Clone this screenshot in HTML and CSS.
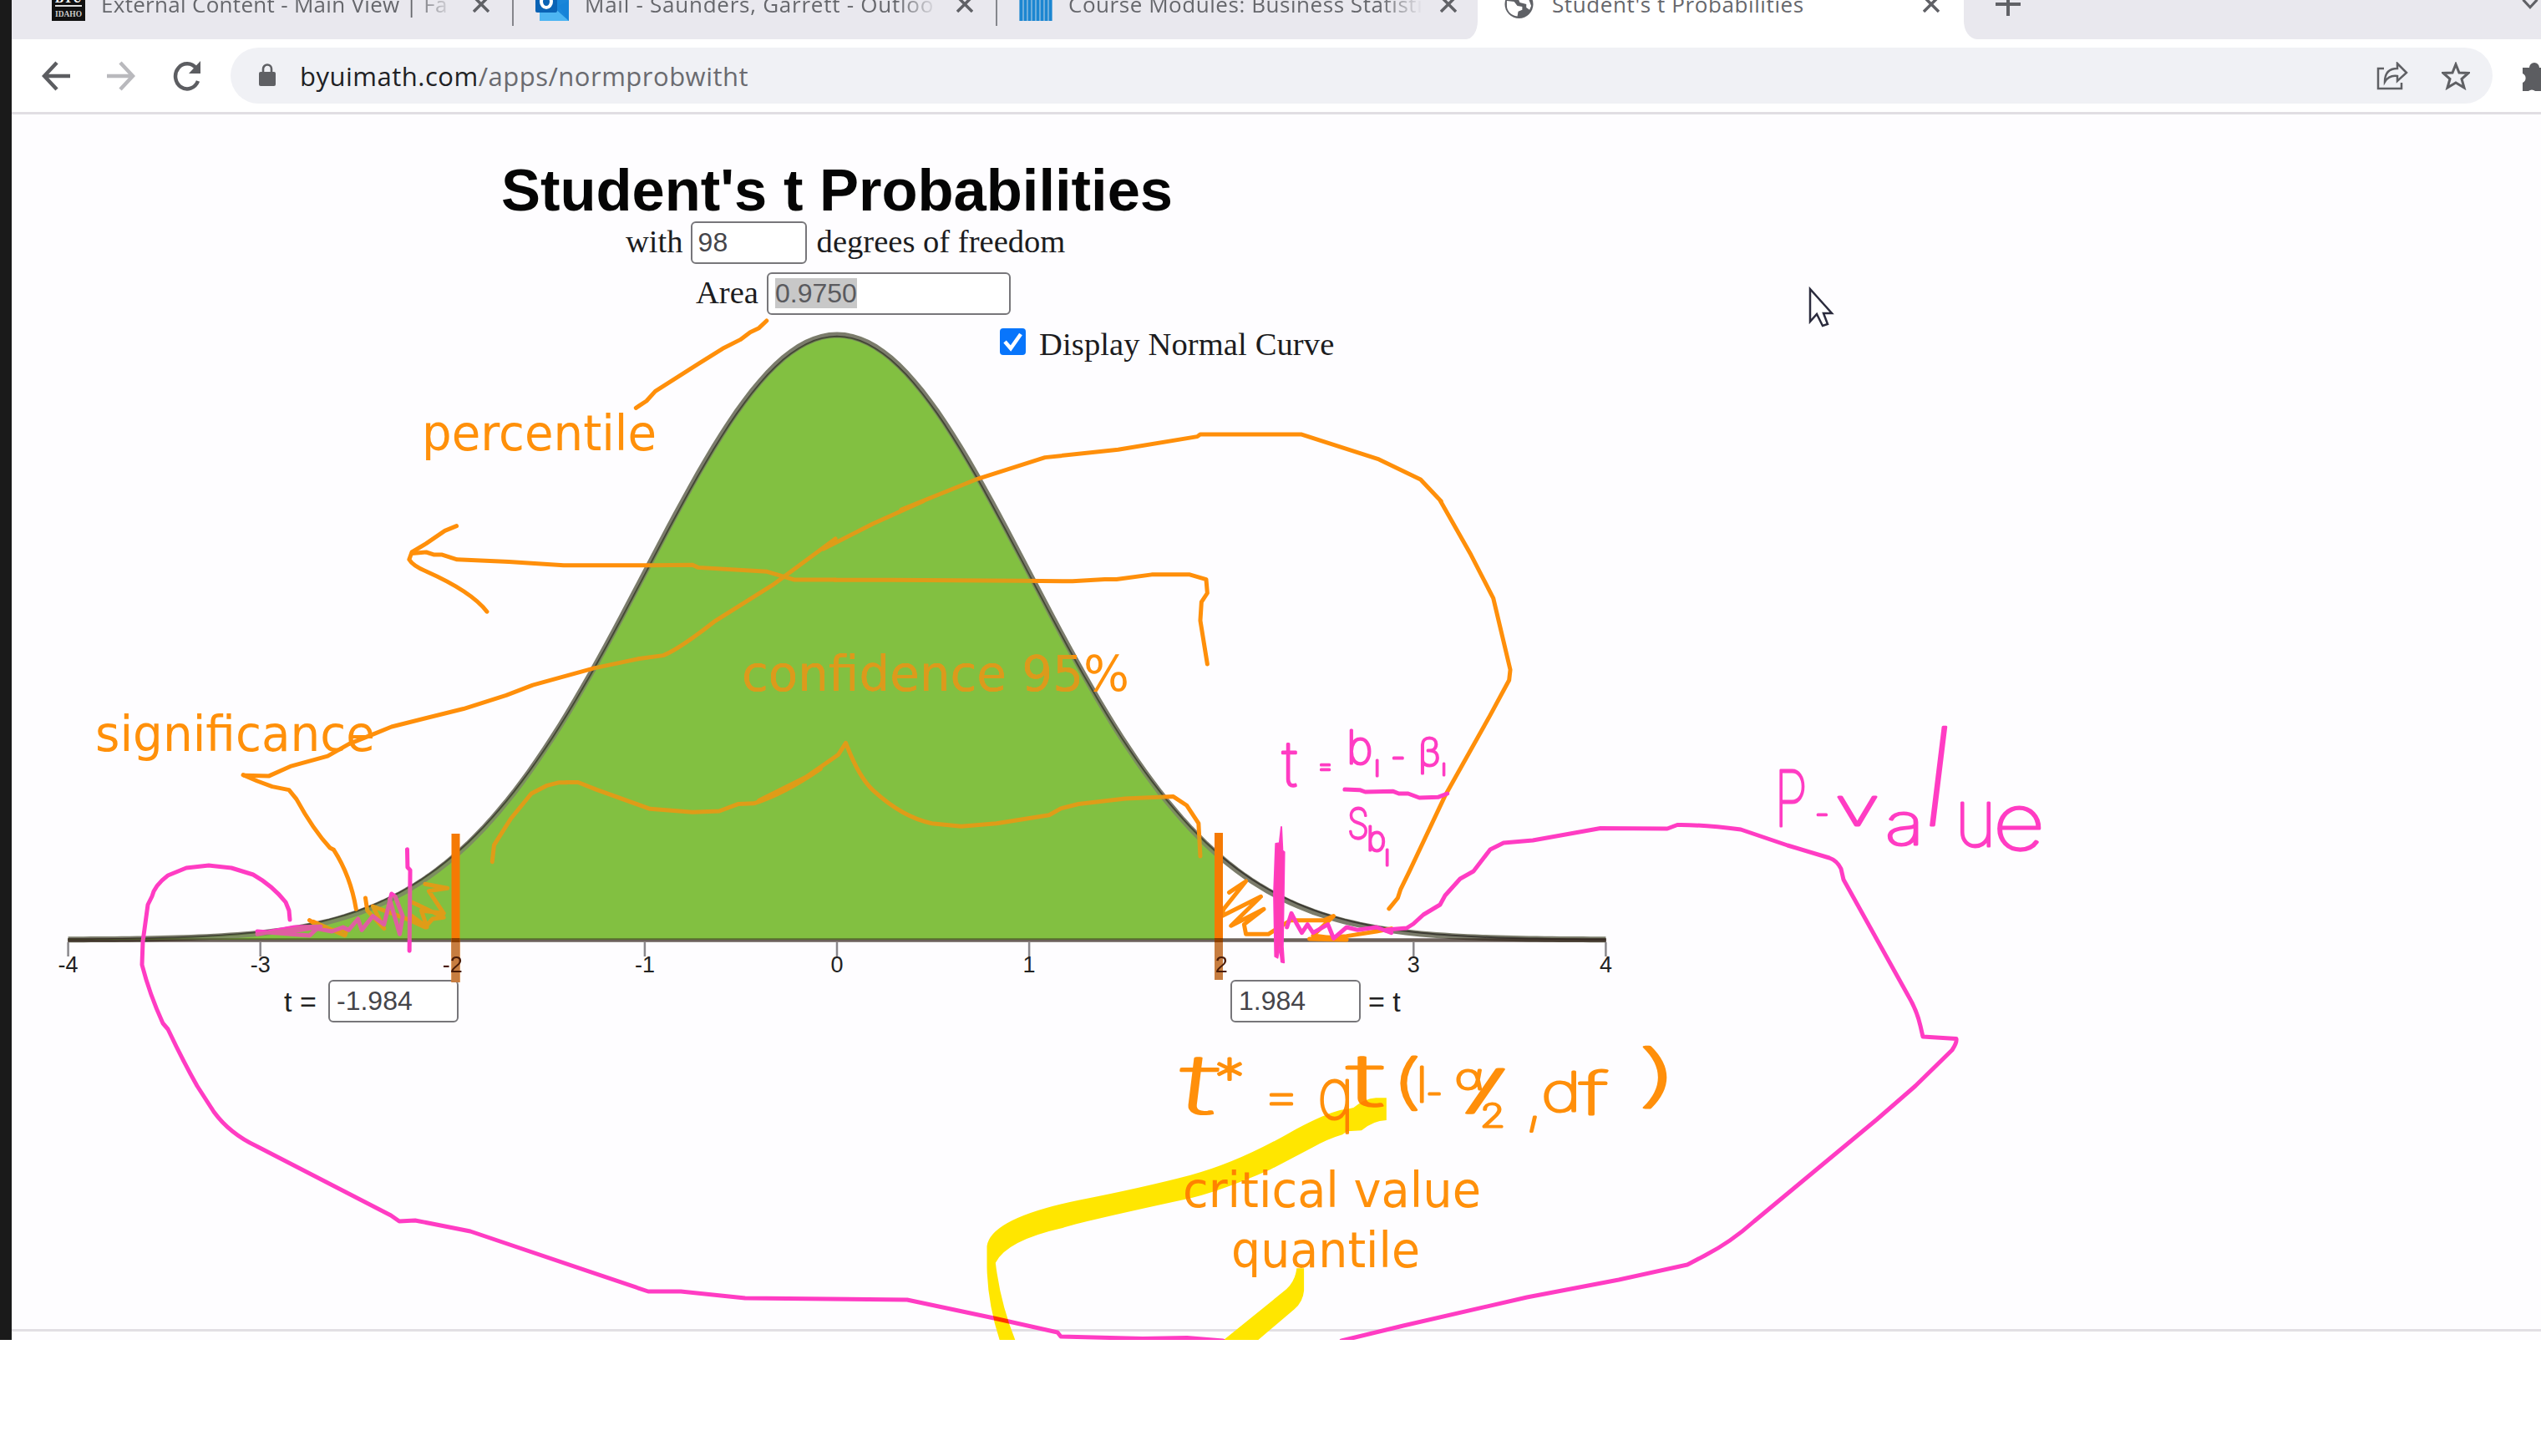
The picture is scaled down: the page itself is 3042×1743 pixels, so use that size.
FILE: index.html
```html
<!DOCTYPE html>
<html lang="en">
<head>
<meta charset="utf-8">
<title>Student's t Probabilities</title>
<link rel="stylesheet" href="styles.css">
</head>
<body>
<div class="screen">
  <div class="window">
    <div class="tabstrip">
      <div class="tab tab-first">
        <svg class="favicon" viewBox="0 0 40 40"><rect width="40" height="40" fill="#111"/><rect x="4" y="21" width="32" height="2" fill="#ddd"/><text class="fav-big" x="20" y="18" textLength="32" lengthAdjust="spacingAndGlyphs">BYU</text><text class="fav-small" x="20" y="35" textLength="32" lengthAdjust="spacingAndGlyphs">IDAHO</text></svg>
        <span class="tab-title fade t1">External Content - Main View | Fa</span>
        <svg class="close" viewBox="0 0 20 20"><path d="M1 1L19 19M19 1L1 19"/></svg>
      </div>
      <div class="tab tab-second">
        <svg class="favicon" viewBox="0 0 40 40"><path d="M8 0H40V40H5V28H8z" fill="#1a86d9"/><path d="M5 30L22 24L40 40H5z" fill="#4db5f2"/><path d="M28 22L40 16V40z" fill="#1683d8"/><rect y="4" width="26" height="26" rx="2" fill="#0a63b5"/><ellipse cx="13" cy="17" rx="6" ry="7" fill="none" stroke="#fff" stroke-width="4"/></svg>
        <span class="tab-title fade t2">Mail - Saunders, Garrett - Outloo</span>
        <svg class="close" viewBox="0 0 20 20"><path d="M1 1L19 19M19 1L1 19"/></svg>
      </div>
      <div class="tab tab-third">
        <svg class="favicon" viewBox="0 0 40 40"><path d="M2.500 40V11M7.500 40V6M12.500 40V2M17.500 40V0M22.500 40V0M27.500 40V2M32.500 40V6M37.500 40V11" stroke="#1c86d1" stroke-width="4.200"/></svg>
        <span class="tab-title fade t3">Course Modules: Business Statisti</span>
        <svg class="close" viewBox="0 0 20 20"><path d="M1 1L19 19M19 1L1 19"/></svg>
      </div>
      <div class="tab tab-active">
        <svg class="globe" viewBox="0 0 36 36"><circle cx="18" cy="18" r="17.500" fill="#5f6166"/><path d="M3 14L12 15L16 20L22 21L22 25L17 27L16 33C8 32 3 26 3 20zM14 3L22 4L20 9L24 12L30 12L33 20L31 25L27 22L27 18L19 16L17 11L12 10z" fill="#fff"/></svg>
        <span class="tab-title t4">Student's t Probabilities</span>
        <svg class="close" viewBox="0 0 20 20"><path d="M1 1L19 19M19 1L1 19"/></svg>
      </div>
      <div class="tab-rest">
        <svg class="plus" viewBox="0 0 30 30"><path d="M15 1V29M0 15H30"/></svg>
        <svg class="chevron" viewBox="0 0 30 16"><path d="M2 1L13 13L24 1"/></svg>
      </div>
    </div>

    <div class="toolbar">
      <svg class="nav back" viewBox="0 0 34 36"><path d="M18 2L3 18L18 34M3 18H34"/></svg>
      <svg class="nav forward" viewBox="0 0 34 36"><path d="M16 2L31 18L16 34M31 18H0"/></svg>
      <svg class="nav reload" viewBox="0 0 34 36"><path d="M29 9A14 15 0 1 0 31 24"/><path class="solid" d="M34 0V15H20z"/></svg>
      <div class="omnibox">
        <svg class="lock" viewBox="0 0 20 27"><path d="M5 12V6.500A5 5 0 0 1 15 6.500V12" fill="none" stroke="#5f6064" stroke-width="2.600"/><rect y="10" width="20" height="17" rx="2" fill="#5f6064"/></svg>
        <span class="url"><b>byuimath.com</b>/apps/normprobwitht</span>
        <svg class="share" viewBox="0 0 38 34"><path d="M9 8H2V32H30V25M25 2L36 13L25 23V17C18 16 13 19 10 24C10 14 15 8 25 8z"/></svg>
        <svg class="star" viewBox="0 0 34 34"><path d="M17 3L21 13L32 13.500L24 20.500L27 31L17 25L7 31L10 20.500L2 13.500L13 13z"/></svg>
      </div>
      <svg class="puzzle" viewBox="0 0 22 36"><path d="M0 8H8A6 6 0 0 1 20 8H22V36H15A6 6 0 0 0 7 36H0V26A6 6 0 0 0 0 15z"/></svg>
    </div>

    <div class="stage">
      <svg class="chart" viewBox="14 137 3028 1467">
        <path id="area" class="area"/>
        <path id="normal" class="normal"/>
        <path id="tcurve" class="tcurve"/>
        <path class="axis" d="M81 1125.500H1923"/>
        <g id="ticks" class="ticks"></g>
      </svg>
      <div class="controls">
        <h1>Student's t Probabilities</h1>
        <div class="row row-df"><span class="label">with</span><span class="field field-df">98</span><span class="label">degrees of freedom</span></div>
        <div class="row row-area"><span class="label">Area</span><span class="field field-area"><mark>0.9750</mark></span></div>
        <div class="row row-normal"><svg class="check" viewBox="0 0 31 32"><rect width="31" height="32" rx="4" fill="#0875fb"/><path d="M6 16L13 24L25 7" fill="none" stroke="#fff" stroke-width="4.500"/></svg><span class="label">Display Normal Curve</span></div>
        <div class="row row-t"><span class="t-label">t =</span><span class="field field-t">-1.984</span><span class="spacer"></span><span class="field field-t">1.984</span><span class="t-label">= t</span></div>
      </div>
    </div>
  </div>

  <svg class="ink" viewBox="0 0 3042 1604">
    <defs><clipPath id="tint"><path id="tintArea"/></clipPath></defs>

    <!-- orange pen -->
    <g class="pen orange">
      <g transform="translate(560 170) scale(.7015 .3333)">
        <path d="M287 955L305 930L320 895L395 795L435 742L465 710L482 683L497 668L510 642"/>
        <path d="M740 1320L825 1248L870 1210L985 1133L1110 1105L1245 1058L1250 1050H1422L1555 1140L1626 1212L1661 1290"/>
      </g>
      <g transform="translate(0 400) scale(.6378 .3827)">
        <path d="M857 600L835 615L800 655L773 682L768 705Q775 725 800 742Q885 805 914 868"/>
        <path d="M773 686L800 682L815 690L830 690L858 705L955 712L1058 723H1220L1300 722L1310 730L1440 743L1490 768H1568"/>
        <path d="M458 1380L505 1382L545 1352L615 1320L655 1282L700 1252L735 1228L870 1172L950 1130L1000 1098L1115 1045L1200 1015L1245 1005Q1275 985 1340 900L1450 785L1568 640"/>
        <path d="M1063 1402H1085L1120 1425L1220 1485L1300 1495L1350 1492L1385 1470L1415 1468Q1470 1440 1540 1360"/>
      </g>
      <g transform="translate(0 900) scale(.4464 .3333)">
        <path d="M652 83L690 105L730 125L775 137L795 170Q840 280 885 345L895 352Q940 445 955 565"/>
        <path d="M1320 395L1325 335L1370 240L1425 150L1465 122L1500 110H1520"/>
        <path d="M830 605L870 640L930 640L925 660L840 610M980 525L985 570L1030 635L1000 555L1100 605L1140 630L1160 600L1190 595L1105 540M1140 475L1200 490L1150 500L1190 580L1130 570L1145 630L1105 590"/>
      </g>
      <g transform="translate(800 600) scale(.7015 .35714)">
        <path d="M285 264H380L600 267L690 268L745 262H765L825 246H890L918 262L920 308L910 338L908 400L920 546"/>
        <path d="M265 160L350 75L435 0"/>
        <path d="M1318 0L1370 180L1408 325L1437 565L1435 600L1402 720L1325 990L1265 1240L1250 1300L1245 1330L1230 1366"/>
        <path d="M155 1003L235 925L290 850L303 810Q325 925 350 970Q400 1060 450 1080L500 1090L560 1080L650 1052L670 1030L700 1015L780 997L862 990L885 1020L905 1080L908 1190"/>
      </g>
      <g transform="translate(1380 850) scale(.4464 .3333)">
        <path d="M205 655L250 615L190 715L185 740L290 670L210 775L298 715L245 770L250 805H310L370 755H460L485 740L430 810L520 825L420 822L520 812L600 795L640 785"/>
      </g>
    </g>

    <!-- magenta pen -->
    <g class="pen magenta">
      <g transform="translate(0 900) scale(.4464 .3333)">
        <path d="M1092 350L1093 415L1100 425L1098 715"/>
        <path d="M690 645L830 660L850 635L890 645L920 630L935 640L960 600L970 640L1000 590L1030 620L1050 510L1060 520L1080 590L1072 655L1045 530M690 655L790 630L860 628L760 650"/>
      </g>
      <path d="M347 1101L346 1090L342 1080Q326 1060 303 1047L277 1039L250 1036L223 1039L201 1048Q185 1060 182 1073L177 1083L171 1127L170 1155Q179 1190 195 1225L201 1232Q219 1270 236 1300L256 1331Q275 1357 307 1372L468 1455L478 1462L497 1461L563 1474L776 1546H815L892 1554L1086 1556L1190 1578L1266 1595L1270 1600L1368 1602.500L1421 1601.500L1464 1605"/>
      <path d="M1606 1605L1680 1587L1828 1553L1938 1532L2020 1514L2041 1503Q2072 1487 2100 1462L2247 1340L2293 1300L2337 1257Q2343 1248 2342 1243.500L2302 1241L2299 1228Q2295 1210 2285 1193L2207 1053L2204 1040Q2199 1030 2190 1027L2140 1012L2084 993Q2036 987 2008 987.500L1996 992L1916 991.500L1835 1006L1800 1009L1784 1017L1764 1043L1748 1052L1730 1072L1724 1083L1704 1095L1692 1106L1684 1111L1660 1113"/>
      <g transform="translate(1380 850) scale(.4464 .3333)">
        <path d="M515 285L555 287L570 294L645 292L660 300L685 300L715 315L765 313L790 300"/>
        <path d="M360 780L372 730L385 765L400 800L415 770L430 800L470 770L485 820L520 780L550 790L600 780L640 800"/>
        <path class="solid" d="M330 480L340 478L345 420L348 505L353 510L349 850L352 907L345 905L340 850L335 890L328 885L325 660z"/>
      </g>
    </g>

    <path id="tintFill" class="tint"/>

    <!-- critical value markers -->
    <path class="marker" d="M545.500 998V1176M1459 997V1173"/>
    <path class="marker-low" d="M545.500 1127V1176M1459 1127V1173"/>
    <path class="marker-join" d="M545.500 1123V1128M1459 1123V1128"/>
    <g class="marker-tick">
      <text x="541.800" y="1164" text-anchor="middle">-2</text>
      <text x="1462.200" y="1164" text-anchor="middle">2</text>
    </g>

    <!-- typed notes -->
    <g class="typed">
      <text x="505" y="539" textLength="281" lengthAdjust="spacingAndGlyphs">percentile</text>
      <text x="114" y="899" textLength="335" lengthAdjust="spacingAndGlyphs">significance</text>
      <text x="1416" y="1445" textLength="357" lengthAdjust="spacingAndGlyphs">critical value</text>
      <text x="1474" y="1517" textLength="226" lengthAdjust="spacingAndGlyphs">quantile</text>
      <text x="888" y="827" textLength="464" lengthAdjust="spacingAndGlyphs">confidence 95%</text>
      <text class="dull" clip-path="url(#tint)" x="888" y="827" textLength="464" lengthAdjust="spacingAndGlyphs">confidence 95%</text>
    </g>

    <!-- handwritten notes -->
    <g class="hand pinktext">
      <text x="1535" y="941" font-size="74">t</text>
      <text x="1577" y="927" font-size="30">=</text>
      <text x="1612" y="914" font-size="54">b</text>
      <text x="1645" y="929" font-size="34">ı</text>
      <text x="1665" y="920" font-size="40">-</text>
      <text x="1698" y="917" font-size="46">β</text>
      <text x="1726" y="928" font-size="24">ı</text>
      <text x="1613" y="1004" font-size="50" textLength="26" lengthAdjust="spacingAndGlyphs">S</text>
      <text x="1636" y="1018" font-size="40">b</text>
      <text x="1657" y="1036" font-size="34">ı</text>
      <text x="2124" y="989" font-size="92" textLength="40" lengthAdjust="spacingAndGlyphs">P</text>
      <text x="2173" y="987" font-size="38">-</text>
      <text x="2197" y="988" font-size="62" textLength="53" lengthAdjust="spacingAndGlyphs">v</text>
      <text x="2257" y="1011" font-size="70" textLength="46" lengthAdjust="spacingAndGlyphs">a</text>
      <text transform="translate(2296 988) skewX(-7)" font-size="162">l</text>
      <text x="2340" y="1013" font-size="96" textLength="50" lengthAdjust="spacingAndGlyphs">u</text>
      <text x="2386" y="1017" font-size="94" textLength="62" lengthAdjust="spacingAndGlyphs">e</text>
    </g>
    <g class="hand orangetext">
      <text transform="translate(1408 1333) skewX(-7)" font-size="98" textLength="46" lengthAdjust="spacingAndGlyphs">t</text>
      <text x="1454" y="1312" font-size="62" textLength="36" lengthAdjust="spacingAndGlyphs">*</text>
      <text x="1511" y="1332" font-size="56" textLength="46" lengthAdjust="spacingAndGlyphs">=</text>
      <text x="1577" y="1339" font-size="84" textLength="44" lengthAdjust="spacingAndGlyphs">q</text>
      <text x="1613" y="1324" font-size="86" textLength="44" lengthAdjust="spacingAndGlyphs">t</text>
      <text x="1665" y="1319" font-size="70" textLength="38" lengthAdjust="spacingAndGlyphs">(</text>
      <text x="1694" y="1319" font-size="76">ı</text>
      <text x="1707" y="1324" font-size="46">-</text>
      <text x="1742" y="1304" font-size="42" textLength="33" lengthAdjust="spacingAndGlyphs">α</text>
      <text x="1753" y="1326" font-size="60" textLength="50" lengthAdjust="spacingAndGlyphs">/</text>
      <text x="1772" y="1349" font-size="38" textLength="30" lengthAdjust="spacingAndGlyphs">2</text>
      <text x="1826" y="1343" font-size="80">,</text>
      <text x="1845" y="1330" font-size="64" textLength="48" lengthAdjust="spacingAndGlyphs">d</text>
      <text x="1891" y="1334" font-size="70" textLength="34" lengthAdjust="spacingAndGlyphs">f</text>
      <text x="1958" y="1315" font-size="80" textLength="54" lengthAdjust="spacingAndGlyphs">)</text>
    </g>

    <!-- highlighter -->
    <g class="highlighter" transform="translate(1100 1300) scale(.38265 .3333)">
      <path d="M1463 43H1430Q1395 45 1360 78Q1340 85 1320 86Q1270 100 1180 155Q1000 275 850 320Q700 365 500 410Q225 475 213 575V650Q215 780 253 914H302Q255 780 240 635Q275 555 450 510Q500 490 830 408Q930 385 1100 300L1230 222Q1280 190 1325 175L1340 163L1385 160Q1420 125 1463 123z"/>
      <path d="M1182 655H1205V735Q1202 775 1175 802L1060 914H952L1150 730Q1178 700 1182 655z"/>
    </g>

    <path class="cursor" d="M2167 346V385L2175 376L2182 390L2188 388L2183 375H2193z"/>
  </svg>
</div>
<script src="chart.js"></script>
</body>
</html>
```
FILE: styles.css
```css
* { box-sizing: border-box; }
body { margin: 0; background: #fff; }
svg { display: block; flex: none; }

.screen { position: relative; width: 3042px; height: 1604px; background: #1a1a1a; padding-left: 14px; overflow: hidden; }
.window { height: 1604px; background: #fefdff; display: flex; flex-direction: column; }

.tabstrip { height: 47px; display: flex; background: #fff; overflow: hidden; font-family: "Open Sans", "Noto Sans", sans-serif; font-size: 26px; color: #66676c; }
.tab, .tab-rest { height: 47px; display: flex; align-items: center; padding-bottom: 37px; background: #e9e8ee; flex: none; }
.tab > *, .tab-rest > * { margin-top: -1px; }
.tab { position: relative; }
.tab-first { width: 600px; padding-left: 48px; }
.tab-second { width: 579px; padding-left: 27px; }
.tab-third { width: 576px; padding-left: 27px; border-bottom-right-radius: 14px 22px; }
.tab-active { width: 582px; padding-left: 32px; background: #fff; }
.tab-rest { flex: 1; padding-left: 38px; justify-content: space-between; border-bottom-left-radius: 16px 22px; }
.tab-first::after, .tab-second::after { content: ""; position: absolute; right: -1px; top: 0; width: 2px; height: 31px; background: #85868c; z-index: 1; }
.favicon { width: 40px; height: 40px; margin-right: 19px; }
.globe { width: 35px; height: 36px; margin-right: 22px; }
.tab-title { line-height: 40px; white-space: nowrap; width: 424px; flex: none; overflow: hidden; }
.t1 { letter-spacing: .3px; }
.t2 { letter-spacing: .75px; }
.t3 { letter-spacing: .55px; }
.t4 { width: 444px; letter-spacing: .6px; }
.fade { -webkit-mask-image: linear-gradient(90deg, #000 88%, transparent 100%); mask-image: linear-gradient(90deg, #000 88%, transparent 100%); }
.close { width: 20px; height: 20px; margin-left: 21px; fill: none; stroke: #606166; stroke-width: 3.500; }
.t4 + .close { margin-left: 0; }
.plus { width: 30px; height: 30px; fill: none; stroke: #606166; stroke-width: 4; }
.chevron { width: 23px; height: 16px; fill: none; stroke: #606166; stroke-width: 4; }
.fav-big { font: bold 19px "Liberation Serif", serif; fill: #fff; text-anchor: middle; }
.fav-small { font: bold 11px "Liberation Serif", serif; fill: #ccc; text-anchor: middle; }

.toolbar { height: 90px; background: #fff; border-bottom: 3px solid #e1dee3; display: flex; align-items: center; padding-left: 36px; flex: none; overflow: hidden; }
.nav { width: 34px; height: 36px; fill: none; stroke: #5c5d61; stroke-width: 4.500; }
.nav .solid { fill: #5c5d61; stroke: none; }
.back { margin-right: 44px; }
.forward { margin-right: 44px; stroke: #b9b9bd; }
.reload { margin-right: 36px; }
.omnibox { width: 2708px; height: 67px; border-radius: 34px; background: #f0f1f5; display: flex; align-items: center; padding-left: 34px; flex: none; }
.lock { width: 20px; height: 27px; margin: 0 29px 2px 0; }
.url { flex: 1; font: 31px/60px "Open Sans", "Noto Sans", sans-serif; letter-spacing: .5px; color: #6a6b70; }
.url b { font-weight: 400; color: #202124; }
.share { width: 38px; height: 34px; margin-right: 40px; fill: none; stroke: #5f6064; stroke-width: 2.500; }
.star { width: 34px; height: 34px; margin-right: 27px; fill: none; stroke: #5f6064; stroke-width: 3; }
.puzzle { width: 22px; height: 36px; margin-left: 36px; fill: #5c5d61; }

.stage { flex: 1; display: grid; }
.chart, .controls { grid-area: 1 / 1; }
.chart { width: 3028px; height: 1467px; background: linear-gradient(#e2dfe4, #e2dfe4) 0 1454px / 100% 3px no-repeat; }
.area { fill: #82c042; }
.normal { fill: none; stroke: #7b7c6b; stroke-width: 7; }
.tcurve { fill: none; stroke: #3d3b34; stroke-width: 2; }
.axis { stroke: #33241c; stroke-opacity: .72; stroke-width: 4.500; }
.ticks line { stroke: #8a888c; stroke-width: 2.500; }
.ticks text { font: 27px "Liberation Sans", Arial, sans-serif; fill: #222; text-anchor: middle; }

.controls { width: 1976px; padding-top: 53px; z-index: 1; }
h1 { margin: 0; height: 75px; text-align: center; font: bold 70.500px/75px "Liberation Sans", Arial, sans-serif; color: #050505; }
.row { display: flex; align-items: center; }
.label { font: 38.600px/44px "Liberation Serif", "Times New Roman", serif; color: #1c1c1e; white-space: nowrap; margin-bottom: 3px; }
.field { border: 2.500px solid #77767a; border-radius: 6px; background: #fff; height: 51px; padding-left: 8px; font: 32px/46px "Liberation Sans", Arial, sans-serif; color: #45454a; flex: none; }
.row-df { padding-left: 735px; }
.field-df { width: 139px; margin: 0 12px 0 9px; padding-left: 7px; }
.row-area { padding-left: 819px; margin-top: 10px; }
.field-area { width: 292px; margin-left: 10px; }
.field mark { display: inline-block; background: #c8c8c8; color: #5a5a5e; line-height: 36px; }
.row-normal { padding-left: 1183px; margin-top: 16px; height: 32px; }
.row-normal .label { margin: 6px 0 0 16px; letter-spacing: .1px; }
.check { width: 31px; height: 32px; }
.row-t { padding-left: 326px; margin-top: 748px; }
.field-t { width: 156px; }
.t-label { font: 34px/46px "Liberation Sans", Arial, sans-serif; color: #222; width: 53px; white-space: nowrap; }
.spacer { width: 924px; }
.field-t + .t-label { margin-left: 9px; }

.ink { position: absolute; left: 0; top: 0; width: 3042px; height: 1604px; z-index: 2; }
.pen path { fill: none; stroke-width: 5; stroke-linejoin: round; stroke-linecap: round; vector-effect: non-scaling-stroke; }
.orange path { stroke: #ff8f0a; }
.magenta path { stroke: #ff3cc3; }
.magenta .solid { fill: #ff3cb4; stroke-width: 2; }
.tint { fill: #82c042; fill-opacity: .26; }
.marker { stroke: #f57a04; stroke-width: 10; }
.marker-low { stroke: #c77d40; stroke-width: 10; }
.marker-join { stroke: #8c3f00; stroke-width: 10; }
.marker-tick { font: 27px "Liberation Sans", Arial, sans-serif; fill: #4a1c08; }
.typed { font: 58px "DejaVu Sans", Verdana, sans-serif; fill: #ff900a; }
.typed .dull { fill: #dc9a1c; }
.hand { font-family: Inter, "Open Sans", sans-serif; font-weight: 100; stroke-width: 3; stroke-linejoin: round; }
.pinktext { fill: #ff3cc3; stroke: #ff3cc3; }
.orangetext { fill: #ff8f0a; stroke: #ff8f0a; }
.highlighter { fill: #ffe600; mix-blend-mode: multiply; }
.cursor { fill: #fff; stroke: #2b2b3d; stroke-width: 2.500; }
```
FILE: chart.js
```js
// Axis geometry: value 0 sits at x = 1002, one unit is 230.1 px wide.
const ZERO = 1002, UNIT = 230.1, BASE = 1125, PEAK = 724, DF = 98;
const px = v => ZERO + v * UNIT;
const normal = v => Math.exp(-v * v / 2);
const student = v => 0.9975 * Math.pow(1 + v * v / DF, -(DF + 1) / 2);

function curve(f, from, to) {
  const points = [];
  for (let i = 0; i <= 200; i++) {
    const v = from + (to - from) * i / 200;
    points.push(px(v).toFixed(1) + " " + (BASE - PEAK * f(v)).toFixed(1));
  }
  return "M" + points.join("L");
}

const area = curve(student, -4, 1.984) + `L${px(1.984)} ${BASE}L${px(-4)} ${BASE}z`;
for (const id of ["area", "tintArea", "tintFill"]) {
  document.getElementById(id).setAttribute("d", area);
}
document.getElementById("normal").setAttribute("d", curve(normal, -4, 4));
document.getElementById("tcurve").setAttribute("d", curve(student, -4, 4));

// The labels at -2 and 2 belong to the critical value markers drawn over the chart.
let marks = "";
for (let v = -4; v <= 4; v++) {
  marks += `<line x1="${px(v)}" x2="${px(v)}" y1="1128" y2="1145"/>`;
  if (Math.abs(v) !== 2) marks += `<text x="${px(v)}" y="1164">${v}</text>`;
}
document.getElementById("ticks").innerHTML = marks;
```
